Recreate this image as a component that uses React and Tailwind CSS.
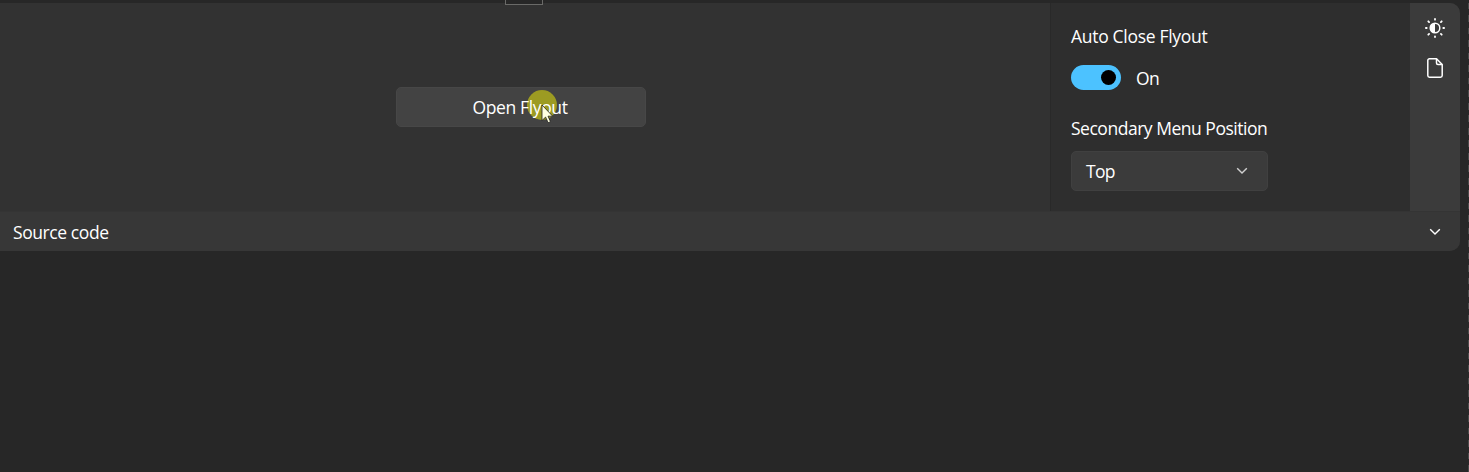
function Chevron({ className }) {
  return (
    <svg className={className} width="12" height="8" viewBox="0 0 12 8" fill="none" stroke="currentColor" strokeWidth="1.4">
      <path d="M1.2 1.2 6 6l4.8-4.8" />
    </svg>
  );
}

function BrightnessIcon() {
  return (
    <svg width="20" height="20" viewBox="0 0 20 20" fill="none" stroke="#fff" strokeWidth="1.8" strokeLinecap="round">
      <circle cx="10" cy="10" r="4.8" strokeWidth="1.5" />
      <path d="M10 5.2a4.800 4.800 0 0 0 0 9.600z" fill="#fff" stroke="none" />
      <path d="M10 .9v.8M10 18.300v.8M.9 10h.8M18.300 10h.8M3.300 3.300l.8.8M15.900 15.900l.8.8M3.300 16.700l.8-.8M15.900 4.100l.8-.8" />
    </svg>
  );
}

function DocumentIcon() {
  return (
    <svg width="16" height="20" viewBox="0 0 16 20" fill="none" stroke="#fff" strokeWidth="1.5" strokeLinejoin="round">
      <path d="M2.500.8H9.500L15.200 6.500V17.500a1.700 1.700 0 0 1-1.700 1.700h-11A1.700 1.700 0 0 1 .8 17.500V2.500A1.700 1.700 0 0 1 2.500.8z" />
      <path d="M9.500.8V5a1.500 1.500 0 0 0 1.500 1.500h4.200" />
    </svg>
  );
}

export default function App() {
  return (
    <div className="relative flex h-[472px] w-[1469px] flex-col overflow-hidden bg-[#272727] pt-[3px] font-['Open_Sans','Noto_Sans',sans-serif] text-[17.5px] leading-6 text-white">
      <div className="absolute left-[505px] top-[-5px] h-[10px] w-[38px] border border-[#6a6a68] bg-[#272727]" />
      <div className="absolute right-0 top-[3px] h-full w-px bg-[repeating-linear-gradient(to_bottom,#4a4a4a_0px,#4a4a4a_6.5px,#292929_6.5px,#292929_12.5px)]" />
      <div className="flex h-[248px] w-[1460px] flex-col overflow-hidden rounded-r-[10px] bg-[#323232]">
        <div className="flex h-[208px]">
          <main className="flex w-[1050px] items-center">
            <button className="relative ml-[396px] h-10 w-[250px] rounded-[5px] border border-[#474747] bg-[#434343]">
              <span className="absolute left-[130px] top-[2px] h-[30px] w-[30px] rounded-full bg-[#9c9b22]" />
              <span className="relative inline-block pr-[2px] tracking-[-0.37px]">Open Flyout</span>
              <svg className="absolute left-[144px] top-[16px]" width="13" height="20" viewBox="0 0 13 20">
                <path d="M1 1v15.500l3.600-3.400 2.500 5.600 2.400-1-2.500-5.500h4.700z" fill="#ffffe0" stroke="#222" strokeWidth=".8" />
              </svg>
            </button>
          </main>
          <aside className="flex w-[360px] flex-col items-start border-l border-[#292929] bg-[#2e2e2e] pl-5 pt-[21px]">
            <div className="tracking-[-0.3px]">Auto Close Flyout</div>
            <div className="mt-[17px] flex h-[25px] items-center">
              <div className="flex h-[25px] w-[50px] items-center justify-end rounded-full bg-[#4cc2ff] pr-[5px]">
                <div className="h-[15px] w-[15px] rounded-full bg-black" />
              </div>
              <span className="ml-[15px] mt-[1px] tracking-[-0.5px]">On</span>
            </div>
            <div className="mt-[26px] tracking-[-0.48px]">Secondary Menu Position</div>
            <div className="mt-[11px] flex h-10 w-[197px] items-center justify-between rounded-[5px] border border-[#404040] bg-[#3b3b3b] pl-[14px] pr-[19px]">
              <span className="tracking-[-0.7px]">Top</span>
              <Chevron className="text-[#d0d0d0]" />
            </div>
          </aside>
          <div className="flex w-[50px] flex-col items-center gap-5 bg-[#3b3b3b] pt-[15px]">
            <BrightnessIcon />
            <DocumentIcon />
          </div>
        </div>
        <div className="flex h-10 items-center justify-between border-t border-[#343434] bg-[#373737] pl-[13px] pr-[19px]">
          <span className="mt-[1px] tracking-[-0.42px]">Source code</span>
          <Chevron className="text-white" />
        </div>
      </div>
    </div>
  );
}
